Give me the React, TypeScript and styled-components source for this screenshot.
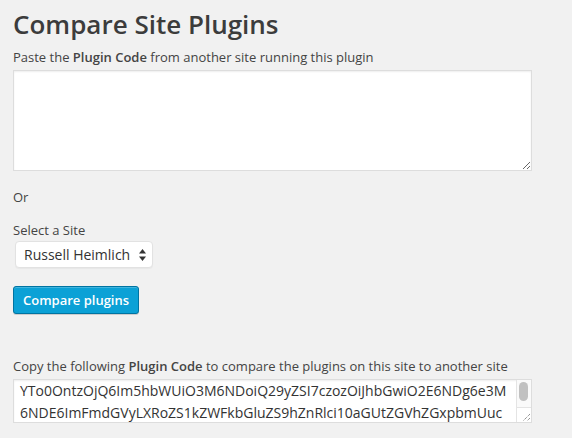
import React, {FC, useState} from 'react';
import styled, {createGlobalStyle} from 'styled-components';

const GlobalStyle = createGlobalStyle`
    html, body {
        margin: 0;
        padding: 0;
        background: #f1f1f1;
    }
    body {
        font-family: "Open Sans", "Liberation Sans", sans-serif;
        font-size: 13px;
        color: #444;
    }
`;

const Page = styled.div`
    padding: 4px 13px 0 13px;
    display: flex;
    flex-direction: column;
    align-items: flex-start;
`;

const Title = styled.h1`
    margin: 0;
    font-size: 26px;
    font-weight: 600;
    line-height: 40px;
    color: #3c3c3c;
`;

const Label = styled.p<{ $top?: number }>`
    margin: ${({$top}) => $top ?? 0}px 0 0 0;
    line-height: 19px;
    font-size: 13px;
    color: #444;

    strong {
        font-weight: 600;
    }
`;

const CodeBox = styled.div<{ $top: number }>`
    position: relative;
    margin-top: ${({$top}) => $top}px;
`;

const CodeArea = styled.textarea<{ $height: number; $pre?: boolean }>`
    box-sizing: border-box;
    width: 519px;
    height: ${({$height}) => $height}px;
    background: #fff;
    border: 1px solid #ddd;
    box-shadow: inset 0 1px 2px rgba(0, 0, 0, 0.07);
    font-family: "Open Sans", "Liberation Sans", sans-serif;
    font-size: 14px;
    line-height: 22px;
    color: #333;
    padding: 0 6px;
    resize: vertical;
    outline: none;
    display: block;
    white-space: ${({$pre}) => ($pre ? 'pre' : 'pre-wrap')};
    overflow: ${({$pre}) => ($pre ? 'hidden' : 'auto')};
`;

/* scrollbar drawn over the read-only code box, as the headless page hides native ones */
const ScrollTrack = styled.div`
    position: absolute;
    top: 1px;
    right: 1px;
    bottom: 1px;
    width: 15px;
    box-sizing: border-box;
    background: #fafafa;
    border-left: 1px solid #e4e4e4;
    pointer-events: none;
`;

const ScrollThumb = styled.div`
    margin: 2px 0 0 2px;
    width: 9px;
    height: 19px;
    border-radius: 5px;
    background: #c1c1c1;
`;

const ResizeCorner = styled.div`
    position: absolute;
    left: 0;
    right: 0;
    bottom: 0;
    height: 14px;
    background: #fff;
    border-top: 1px solid #e4e4e4;
    display: flex;
    align-items: flex-end;
    justify-content: flex-end;
`;

const SelectWrap = styled.div`
    position: relative;
    margin-top: 1px;
    margin-left: 2px;
`;

const SiteSelect = styled.select`
    appearance: none;
    -webkit-appearance: none;
    box-sizing: border-box;
    width: 138px;
    height: 27px;
    padding: 0 14px 0 8px;
    background: #fff;
    border: 1px solid #e2e2e2;
    border-radius: 4px;
    box-shadow: 0 1px 1px rgba(0, 0, 0, 0.04);
    font-family: "Open Sans", "Liberation Sans", sans-serif;
    font-size: 14px;
    color: #333;
    outline: none;
`;

const Arrows = styled.svg`
    position: absolute;
    right: 7px;
    top: 8px;
    pointer-events: none;
`;

const PrimaryButton = styled.button`
    box-sizing: border-box;
    margin-top: 18px;
    height: 28px;
    padding: 0 9px 1px;
    background: #0ba1d6;
    border: 1px solid #0074a2;
    border-radius: 3px;
    box-shadow: inset 0 1px 0 rgba(120, 200, 230, 0.5), 0 1px 0 rgba(0, 0, 0, 0.15);
    color: #fff;
    font-family: "Open Sans", "Liberation Sans", sans-serif;
    font-size: 13px;
    font-weight: 600;
    cursor: pointer;
`;

const pluginCode = [
    'YTo0OntzOjQ6Im5hbWUiO3M6NDoiQ29yZSI7czozOiJhbGwiO2E6NDg6e3M',
    '6NDE6ImFmdGVyLXRoZS1kZWFkbGluZS9hZnRlci10aGUtZGVhZGxpbmUuc',
    'GhwIjtzOjU6IjAuOS41Ijt9czoxOToiYWtpc21ldC9ha2lzbWV0LnBocCI7',
    'czo1OiIzLjAuNCI7czozMzoiY2xhc3NpYy1lZGl0b3IvY2xhc3NpYy1lZGl0',
    'b3IucGhwIjtzOjM6IjEuMCI7czozNjoiY29tcGFyZS1zaXRlLXBsdWdpbnMv',
    'Y29tcGFyZS1zaXRlLXBsdWdpbnMucGhwIjtzOjM6IjAuMSI7czoyNToiamV0',
    'cGFjay9qZXRwYWNrLnBocCI7czo1OiIzLjQuMSI7czoxNzoiaGVsbG8tZG9s',
    'bHkvaGVsbG8ucGhwIjtzOjU6IjEuNi4xIjtzOjI0OiJ3b3JkcHJlc3MtaW1w',
    'b3J0ZXIvd29yZHByZXNzLWltcG9ydGVyLnBocCI7czo1OiIwLjYuMSI7fX0=',
].join('\n');

const ComparePlugins: FC = () => {
    const [incoming, setIncoming] = useState('');
    const [site, setSite] = useState('russell');

    return (
        <Page>
            <Title>Compare Site Plugins</Title>
            <Label $top={4}>Paste the <strong>Plugin Code</strong> from another site running this plugin</Label>
            <CodeBox $top={3}>
                <CodeArea
                    $height={101}
                    value={incoming}
                    onChange={e => setIncoming(e.target.value)}
                />
            </CodeBox>

            <Label $top={17}>Or</Label>
            <Label $top={14}>Select a Site</Label>
            <SelectWrap>
                <SiteSelect value={site} onChange={e => setSite(e.target.value)}>
                    <option value="russell">Russell Heimlich</option>
                    <option value="other">Another Site</option>
                </SiteSelect>
                <Arrows width="7" height="12" viewBox="0 0 7 12">
                    <path d="M3.5 0 L7 4.6 L0 4.6 Z" fill="#333"/>
                    <path d="M3.5 12 L7 7.4 L0 7.4 Z" fill="#333"/>
                </Arrows>
            </SelectWrap>
            <PrimaryButton type="button">Compare plugins</PrimaryButton>

            <Label $top={43}>Copy the following <strong>Plugin Code</strong> to compare the plugins on this site to another site</Label>
            <CodeBox $top={3}>
                <CodeArea $height={44} $pre value={pluginCode} readOnly/>
                <ScrollTrack>
                    <ScrollThumb/>
                    <ResizeCorner>
                        <svg width="10" height="10" viewBox="0 0 10 10">
                            <path d="M9 2 L2 9 M9 6 L6 9" stroke="#666" strokeWidth="1" strokeDasharray="1 1"/>
                        </svg>
                    </ResizeCorner>
                </ScrollTrack>
            </CodeBox>
        </Page>
    );
};

const App: FC = () => (
    <>
        <GlobalStyle/>
        <ComparePlugins/>
    </>
);

export default App;
